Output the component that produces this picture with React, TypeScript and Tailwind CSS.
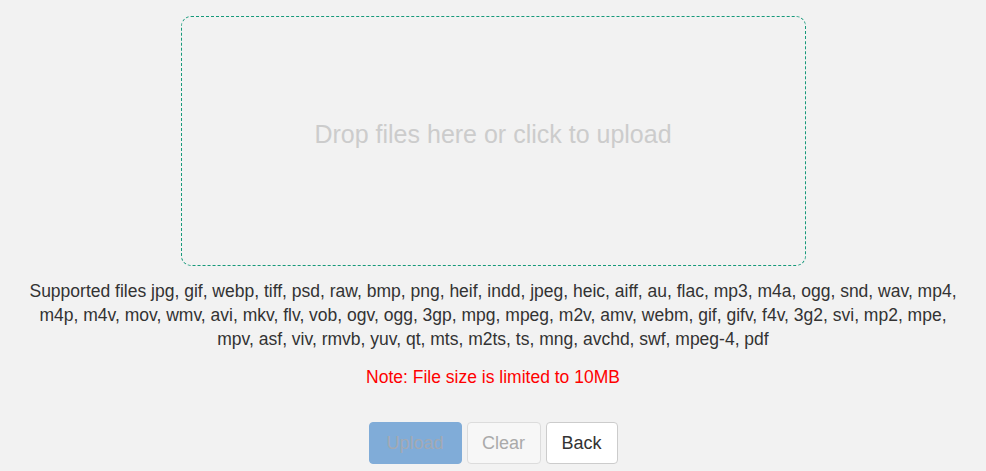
import React from "react";

export default function App() {
  return (
    <div
      className="min-h-[471px] w-full bg-[#f2f2f2] text-[#333]"
      style={{ fontFamily: '"Liberation Sans", Arial, sans-serif' }}
    >
      <div className="flex flex-col items-center px-[25px] pt-[16px]">
        <div className="flex h-[250px] w-[625px] cursor-pointer items-center justify-center rounded-[10px] border border-dashed border-[#16997a] pb-[12px]">
          <span className="text-[25px] text-[#cccccc]">Drop files here or click to upload</span>
        </div>
        <p className="mt-[13px] text-center text-[17.5px] leading-[24px] text-[#333]">
          Supported files jpg, gif, webp, tiff, psd, raw, bmp, png, heif, indd, jpeg, heic, aiff, au, flac, mp3, m4a, ogg, snd, wav, mp4, m4p, m4v, mov, wmv, avi, mkv, flv, vob, ogv, ogg, 3gp, mpg, mpeg, m2v, amv, webm, gif, gifv, f4v, 3g2, svi, mp2, mpe, mpv, asf, viv, rmvb, yuv, qt, mts, m2ts, ts, mng, avchd, swf, mpeg-4, pdf
        </p>
        <p className="mt-[14px] text-center text-[17.5px] leading-[24px] text-[#ff0000]">
          Note: File size is limited to 10MB
        </p>
        <div className="mt-[33px] flex gap-[5px]">
          <button
            disabled
            className="h-[42px] w-[93px] rounded-[4px] border border-[#80acd8] bg-[#80acd8] text-[18px] text-[#a3a9b3]"
          >
            Upload
          </button>
          <button
            disabled
            className="h-[42px] w-[74px] rounded-[4px] border border-[#dcdcdc] bg-[#f7f7f7] text-[18px] text-[#aaaaaa]"
          >
            Clear
          </button>
          <button className="h-[42px] w-[72px] rounded-[4px] border border-[#cccccc] bg-white text-[18px] text-[#333]">
            Back
          </button>
        </div>
      </div>
    </div>
  );
}
